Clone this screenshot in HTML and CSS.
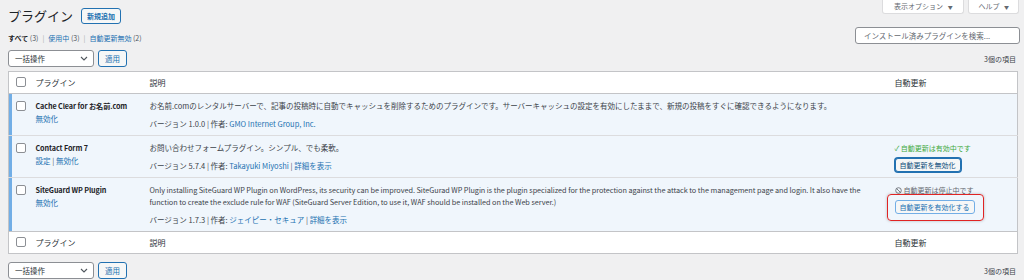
FILE: index.html
```html
<!DOCTYPE html>
<html lang="ja">
<head>
  <meta charset="UTF-8" />
  <title>プラグイン</title>
  <link rel="stylesheet" href="styles.css">
</head>
<body>
  <div class="wrap">

    <!-- Page heading + screen options -->
    <header class="page-head">
      <div class="title-group">
        <h1>プラグイン</h1>
        <a class="add-new" href="#">新規追加</a>
      </div>
      <div class="meta-links">
        <span class="meta-tab">表示オプション <span class="caret">▼</span></span>
        <span class="meta-tab">ヘルプ <span class="caret">▼</span></span>
      </div>
    </header>

    <!-- Filters + search -->
    <div class="filter-row">
      <ul class="subsubsub">
        <li><b>すべて</b> <span class="count">(3)</span></li>
        <li class="sep">|</li>
        <li><a href="#">使用中</a> <span class="count">(3)</span></li>
        <li class="sep">|</li>
        <li><a href="#">自動更新無効</a> <span class="count">(2)</span></li>
      </ul>
      <div class="search-box">インストール済みプラグインを検索...</div>
    </div>

    <div class="tablenav top">
      <div class="bulk">
        <div class="select">一括操作
          <svg width="8" height="5" viewBox="0 0 8 5"><path d="M1 1l3 3 3-3" fill="none" stroke="#50575e" stroke-width="1.1"/></svg>
        </div>
        <span class="btn">適用</span>
      </div>
      <span class="num">3個の項目</span>
    </div>

    <table class="plugins">
      <colgroup>
        <col class="c-check"><col class="c-name"><col><col class="c-auto">
      </colgroup>
      <thead>
        <tr>
          <td class="check"><span class="cb"></span></td>
          <th>プラグイン</th>
          <th>説明</th>
          <th class="auto-head">自動更新</th>
        </tr>
      </thead>
      <tbody>
        <tr class="active">
          <td class="check"><span class="cb"></span></td>
          <td class="name">
            <strong>Cache Clear for お名前.com</strong>
            <div class="row-actions"><a href="#">無効化</a></div>
          </td>
          <td class="desc">
            <p>お名前.comのレンタルサーバーで、記事の投稿時に自動でキャッシュを削除するためのプラグインです。サーバーキャッシュの設定を有効にしたままで、新規の投稿をすぐに確認できるようになります。</p>
            <div class="meta">バージョン 1.0.0 <span class="bar">|</span> 作者: <a href="#">GMO Internet Group, Inc.</a></div>
          </td>
          <td class="auto"></td>
        </tr>
        <tr class="active">
          <td class="check"><span class="cb"></span></td>
          <td class="name">
            <strong>Contact Form 7</strong>
            <div class="row-actions"><a href="#">設定</a> <span class="bar">|</span> <a href="#">無効化</a></div>
          </td>
          <td class="desc">
            <p>お問い合わせフォームプラグイン。シンプル、でも柔軟。</p>
            <div class="meta">バージョン 5.7.4 <span class="bar">|</span> 作者: <a href="#">Takayuki Miyoshi</a> <span class="bar">|</span> <a href="#">詳細を表示</a></div>
          </td>
          <td class="auto">
            <div class="status on">✓ 自動更新は有効中です</div>
            <span class="btn focus">自動更新を無効化</span>
          </td>
        </tr>
        <tr class="active">
          <td class="check"><span class="cb"></span></td>
          <td class="name">
            <strong>SiteGuard WP Plugin</strong>
            <div class="row-actions"><a href="#">無効化</a></div>
          </td>
          <td class="desc">
            <p class="en">Only installing SiteGuard WP Plugin on WordPress, its security can be improved. SiteGurad WP Plugin is the plugin specialized for the protection against the attack to the management page and login. It also have the function to create the exclude rule for WAF (SiteGuard Server Edition, to use it, WAF should be installed on the Web server.)</p>
            <div class="meta">バージョン 1.7.3 <span class="bar">|</span> 作者: <a href="#">ジェイピー・セキュア</a> <span class="bar">|</span> <a href="#">詳細を表示</a></div>
          </td>
          <td class="auto">
            <div class="status off">
              <svg width="7" height="7" viewBox="0 0 10 10"><circle cx="5" cy="5" r="4" fill="none" stroke="#646970" stroke-width="1.2"/><path d="M2.2 2.2l5.6 5.6" stroke="#646970" stroke-width="1.2"/></svg>自動更新は停止中です
            </div>
            <span class="mark"><span class="btn">自動更新を有効化する</span></span>
          </td>
        </tr>
      </tbody>
      <tfoot>
        <tr>
          <td class="check"><span class="cb"></span></td>
          <th>プラグイン</th>
          <th>説明</th>
          <th class="auto-head">自動更新</th>
        </tr>
      </tfoot>
    </table>

    <div class="tablenav bottom">
      <div class="bulk">
        <div class="select">一括操作
          <svg width="8" height="5" viewBox="0 0 8 5"><path d="M1 1l3 3 3-3" fill="none" stroke="#50575e" stroke-width="1.1"/></svg>
        </div>
        <span class="btn">適用</span>
      </div>
      <span class="num">3個の項目</span>
    </div>

  </div>
</body>
</html>
```

FILE: styles.css
```css
/* General */
body {
  margin: 0;
  background: #f0f0f1;
  color: #3c434a;
  font-family: "Noto Sans CJK JP", "Noto Sans", sans-serif;
  font-size: 7.5px;
  line-height: 12px;
}

a {
  color: #2271b1;
  text-decoration: none;
}

.wrap {
  padding: 0 6px 0 8px;
}

/* Heading */
.page-head {
  display: flex;
  justify-content: space-between;
  align-items: flex-start;
  height: 27px;
}

.title-group {
  display: flex;
  align-items: center;
  gap: 8px;
  padding-top: 7px;
}

h1 {
  margin: 0;
  font-size: 13px;
  font-weight: 400;
  line-height: 18px;
  color: #1d2327;
}

.add-new {
  display: inline-block;
  height: 14px;
  line-height: 14px;
  padding: 0 5px;
  border: 1px solid #2271b1;
  border-radius: 3px;
  background: #f6f7f7;
  font-weight: 600;
  font-size: 7px;
}

.meta-links {
  display: flex;
  gap: 4px;
  margin-right: -1px;
}

.meta-tab {
  display: block;
  height: 13px;
  line-height: 12px;
  padding: 0 9px;
  background: #fff;
  border: 1px solid #dcdcde;
  border-top: none;
  border-radius: 0 0 3px 3px;
  color: #646970;
  font-size: 7px;
}

.meta-tab:first-child {
  width: 62px;
  text-align: center;
}

.caret {
  font-size: 5px;
  margin-left: 3px;
}

/* Filters */
.filter-row {
  display: flex;
  justify-content: space-between;
  align-items: flex-end;
  height: 17px;
}

.subsubsub {
  list-style: none;
  margin: 0;
  padding: 0;
  display: flex;
  gap: 4px;
  font-size: 7px;
  line-height: 11px;
}

.subsubsub b {
  color: #1d2327;
  font-weight: 700;
}

.subsubsub .count {
  color: #50575e;
}

.subsubsub .sep {
  color: #a7aaad;
}

.search-box {
  width: 155px;
  height: 15px;
  line-height: 15px;
  padding-left: 8px;
  margin-right: -2px;
  background: #fff;
  border: 1px solid #8c8f94;
  border-radius: 3px;
  color: #646970;
}

/* Table nav */
.tablenav {
  display: flex;
  justify-content: space-between;
  align-items: center;
  height: 17px;
  margin-top: 6px;
}

.tablenav.bottom {
  margin-top: 8px;
}

.bulk {
  display: flex;
  gap: 4px;
}

.select {
  display: flex;
  justify-content: space-between;
  align-items: center;
  box-sizing: border-box;
  width: 86px;
  height: 17px;
  padding: 0 5px 0 6px;
  background: #fff;
  border: 1px solid #8c8f94;
  border-radius: 3px;
  color: #2c3338;
}

.btn {
  display: inline-block;
  box-sizing: border-box;
  height: 17px;
  line-height: 15px;
  padding: 0 6px;
  background: #f6f7f7;
  border: 1px solid #2271b1;
  border-radius: 3px;
  color: #2271b1;
}

.num {
  color: #3c434a;
  font-size: 7px;
  padding-right: 2px;
}

/* Plugins table */
.plugins {
  width: 100%;
  margin-top: 4px;
  border-collapse: collapse;
  table-layout: fixed;
  background: #fff;
  border: 1px solid #c3c4c7;
}

.c-check { width: 19px; }
.c-name { width: 114px; }
.c-auto { width: 131px; }

.plugins th,
.plugins td {
  text-align: left;
  vertical-align: top;
  padding: 5px 8px 4px;
}

.plugins th {
  font-weight: 400;
  font-size: 8px;
  color: #2c3338;
}

.plugins thead tr {
  border-bottom: 1px solid #c3c4c7;
}

.plugins tfoot tr {
  border-top: 1px solid #c3c4c7;
}

.plugins td.check {
  padding: 5px 0 0 7px;
}

.cb {
  display: block;
  box-sizing: border-box;
  width: 10px;
  height: 10px;
  background: #fff;
  border: 1px solid #8c8f94;
  border-radius: 2px;
}

.plugins tbody tr {
  background: #f0f6fc;
  border-bottom: 1px solid #dcdcde;
}

.plugins tbody tr:last-child {
  border-bottom: none;
}

.plugins tbody td {
  padding: 6px 8px 5px;
}

.plugins tbody td.check {
  padding: 7px 0 0 7px;
  box-shadow: inset 3px 0 0 #72aee6;
}

.name strong {
  display: block;
  white-space: nowrap;
  color: #1d2327;
  font-weight: 700;
  font-size: 7.2px;
  letter-spacing: -0.1px;
}

.row-actions {
  margin-top: 1px;
}

.desc p {
  margin: 0 0 6px;
}

.desc p.en {
  font-size: 7.3px;
  letter-spacing: -0.05px;
}

.meta {
  color: #3c434a;
}

.bar {
  color: #50575e;
}

.auto {
  color: #646970;
}

.status {
  display: flex;
  align-items: center;
  gap: 2px;
  margin-bottom: 4px;
  font-size: 7px;
}

.status.on {
  color: #3faa3f;
}

.auto .btn {
  height: 14px;
  line-height: 12px;
  padding: 0 4px;
  font-size: 7px;
}

.auto .btn.focus {
  color: #0a4b78;
  box-shadow: 0 0 0 1px #2271b1;
}

.mark .btn {
  border-color: #72aee6;
}

/* red annotation around the enable button */
.mark {
  position: relative;
  display: inline-block;
}

.mark::after {
  content: "";
  position: absolute;
  top: -6px;
  bottom: -7px;
  left: -8px;
  right: -9px;
  border: 1.5px solid #e02424;
  border-radius: 4px;
  box-shadow: 0 0 3px rgba(0, 0, 0, 0.25);
}
```
